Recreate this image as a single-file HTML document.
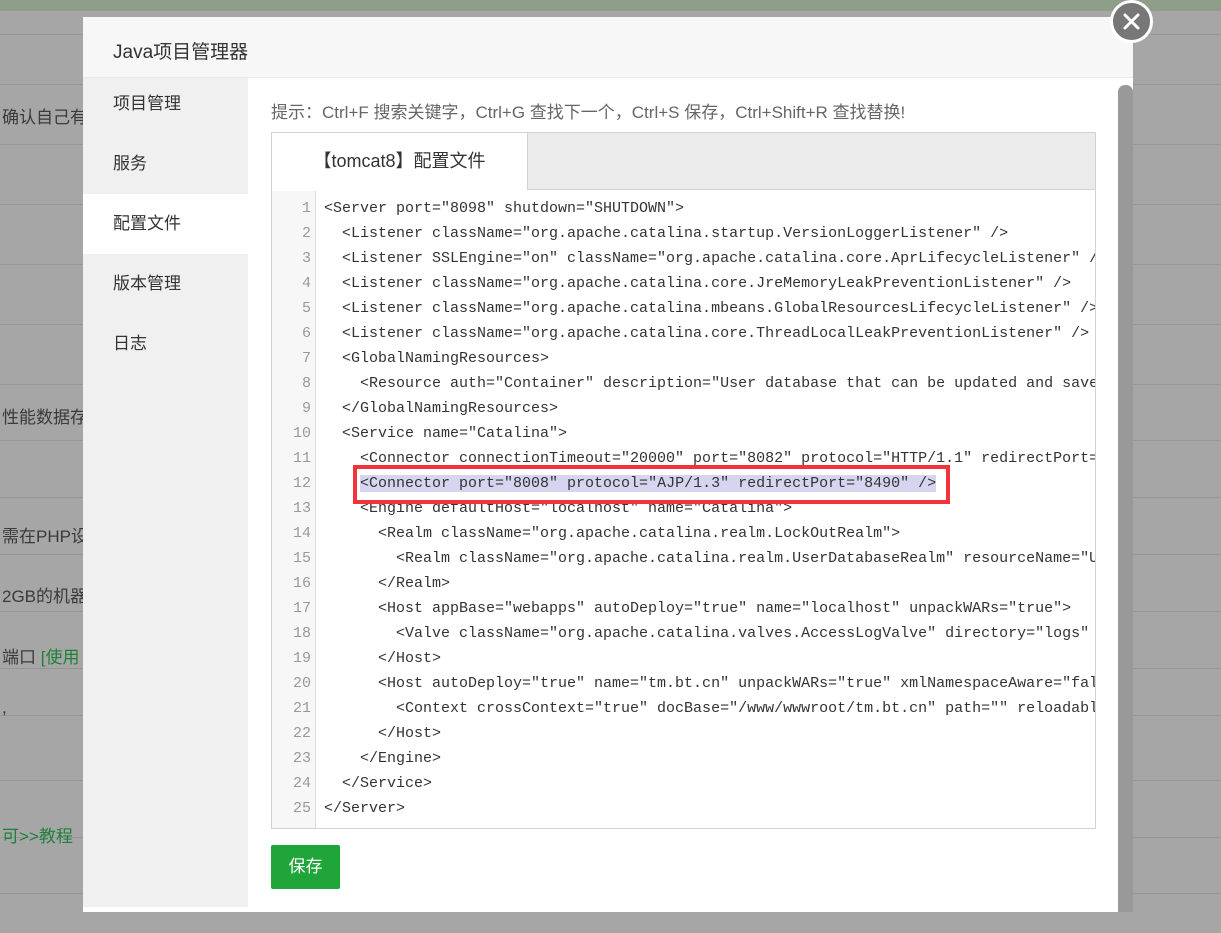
<!DOCTYPE html>
<html><head><meta charset="utf-8"><style>
*{margin:0;padding:0;box-sizing:border-box}
body{width:1221px;height:933px;overflow:hidden;background:#a6a6a6;position:relative;font-family:"Liberation Sans","Noto Sans CJK SC",sans-serif}
.top{position:absolute;left:0;top:0;width:1221px;height:11px;background:#8e9e88}
.ln{position:absolute;left:0;width:1221px;height:1px;background:#969696}
.bt{position:absolute;left:2px;font-size:17px;color:#3a3a3a}
.modal{position:absolute;left:83px;top:17px;width:1050px;height:895px;background:#fff}
.hd{position:absolute;left:0;top:0;width:1050px;height:61px;background:#f7f7f7;border-bottom:1px solid #e9e9e9;font-size:19px;color:#333;padding:20px 0 0 30px}
.side{position:absolute;left:0;top:61px;width:165px;height:829px;background:#f0f0f0}
.side div{height:60px;line-height:60px;padding-left:30px;font-size:17px;color:#333}
.side div:first-child{height:56px;line-height:52px}
.side .on{background:#fff}
.tip{position:absolute;left:188px;top:81px;font-size:17px;color:#666}
.ed{position:absolute;left:188px;top:115px;width:825px;height:697px;border:1px solid #d2d2d2;background:#fff}
.tabs{position:absolute;left:0;top:0;width:823px;height:57px;background:#ebebeb;border-bottom:1px solid #d2d2d2}
.tab{position:absolute;left:0;top:0;width:256px;height:57px;background:#fff;border-right:1px solid #d2d2d2;font-size:18px;color:#333;text-align:center;line-height:56px}
.gut{position:absolute;left:0;top:58px;width:44px;height:637px;background:#f7f7f7;border-right:1px solid #ddd}
.code{position:absolute;left:0;top:63px;width:823px;height:630px;overflow:hidden;font-family:"Liberation Mono","Noto Sans CJK SC",monospace;font-size:15px;color:#333}
.r{height:25px;line-height:25px;white-space:pre;position:relative}
.r i{font-style:normal;display:inline-block;width:39px;text-align:right;color:#999;margin-right:13px}
.hl{background:#d7d4f0}
.red{position:absolute;left:270px;top:448px;width:597px;height:39px;border:4px solid #f2343a}
.save{position:absolute;left:188px;top:828px;width:69px;height:44px;background:#20a53a;color:#fff;font-size:17px;text-align:center;line-height:44px;border-radius:2px}
.sb{position:absolute;left:1035px;top:68px;width:15px;height:827px;background:#999;border-radius:7px 7px 0 0}
.close{position:absolute;left:1110px;top:0;width:43px;height:43px;border-radius:50%;background:#777;border:3px solid #fff;}
</style></head><body>
<div class="top"></div>
<div class="ln" style="top:34px"></div><div class="ln" style="top:84px"></div><div class="ln" style="top:144px"></div><div class="ln" style="top:204px"></div><div class="ln" style="top:264px"></div><div class="ln" style="top:324px"></div><div class="ln" style="top:384px"></div><div class="ln" style="top:440px"></div><div class="ln" style="top:497px"></div><div class="ln" style="top:554px"></div><div class="ln" style="top:611px"></div><div class="ln" style="top:668px"></div><div class="ln" style="top:715px"></div><div class="ln" style="top:780px"></div><div class="ln" style="top:837px"></div><div class="ln" style="top:893px"></div>
<div class="bt" style="top:103px">确认自己有</div>
<div class="bt" style="top:403px">性能数据存储</div>
<div class="bt" style="top:522px">需在PHP设置</div>
<div class="bt" style="top:582px">2GB的机器</div>
<div class="bt" style="top:643px">端口 <span style="color:#20803a">[使用</span></div>
<div class="bt" style="top:698px">,</div>
<div class="bt" style="top:822px;color:#20803a">可>>教程</div>
<div class="modal">
<div class="hd">Java项目管理器</div>
<div class="side"><div>项目管理</div><div>服务</div><div class="on">配置文件</div><div>版本管理</div><div>日志</div></div>
<div class="tip">提示：Ctrl+F 搜索关键字，Ctrl+G 查找下一个，Ctrl+S 保存，Ctrl+Shift+R 查找替换!</div>
<div class="ed">
<div class="tabs"><div class="tab">【tomcat8】配置文件</div></div>
<div class="gut"></div>
<div class="code">
<div class="r"><i>1</i>&lt;Server port="8098" shutdown="SHUTDOWN"&gt;</div>
<div class="r"><i>2</i>  &lt;Listener className="org.apache.catalina.startup.VersionLoggerListener" /&gt;</div>
<div class="r"><i>3</i>  &lt;Listener SSLEngine="on" className="org.apache.catalina.core.AprLifecycleListener" /&gt;</div>
<div class="r"><i>4</i>  &lt;Listener className="org.apache.catalina.core.JreMemoryLeakPreventionListener" /&gt;</div>
<div class="r"><i>5</i>  &lt;Listener className="org.apache.catalina.mbeans.GlobalResourcesLifecycleListener" /&gt;</div>
<div class="r"><i>6</i>  &lt;Listener className="org.apache.catalina.core.ThreadLocalLeakPreventionListener" /&gt;</div>
<div class="r"><i>7</i>  &lt;GlobalNamingResources&gt;</div>
<div class="r"><i>8</i>    &lt;Resource auth="Container" description="User database that can be updated and saved"</div>
<div class="r"><i>9</i>  &lt;/GlobalNamingResources&gt;</div>
<div class="r"><i>10</i>  &lt;Service name="Catalina"&gt;</div>
<div class="r"><i>11</i>    &lt;Connector connectionTimeout="20000" port="8082" protocol="HTTP/1.1" redirectPort="8490"</div>
<div class="r"><i>12</i>    <span class="hl">&lt;Connector port="8008" protocol="AJP/1.3" redirectPort="8490" /&gt;</span></div>
<div class="r"><i>13</i>    &lt;Engine defaultHost="localhost" name="Catalina"&gt;</div>
<div class="r"><i>14</i>      &lt;Realm className="org.apache.catalina.realm.LockOutRealm"&gt;</div>
<div class="r"><i>15</i>        &lt;Realm className="org.apache.catalina.realm.UserDatabaseRealm" resourceName="UserDatabase"</div>
<div class="r"><i>16</i>      &lt;/Realm&gt;</div>
<div class="r"><i>17</i>      &lt;Host appBase="webapps" autoDeploy="true" name="localhost" unpackWARs="true"&gt;</div>
<div class="r"><i>18</i>        &lt;Valve className="org.apache.catalina.valves.AccessLogValve" directory="logs" prefix</div>
<div class="r"><i>19</i>      &lt;/Host&gt;</div>
<div class="r"><i>20</i>      &lt;Host autoDeploy="true" name="tm.bt.cn" unpackWARs="true" xmlNamespaceAware="false"</div>
<div class="r"><i>21</i>        &lt;Context crossContext="true" docBase="/www/wwwroot/tm.bt.cn" path="" reloadable="true"</div>
<div class="r"><i>22</i>      &lt;/Host&gt;</div>
<div class="r"><i>23</i>    &lt;/Engine&gt;</div>
<div class="r"><i>24</i>  &lt;/Service&gt;</div>
<div class="r"><i>25</i>&lt;/Server&gt;</div>
</div>
</div>
<div class="red"></div>
<div class="save">保存</div>
<div class="sb"></div>
</div>
<div class="close"><svg width="37" height="37" viewBox="0 0 37 37"><path d="M12 12L25 25M25 12L12 25" stroke="#fff" stroke-width="3" stroke-linecap="round"/></svg></div>
</body></html>
